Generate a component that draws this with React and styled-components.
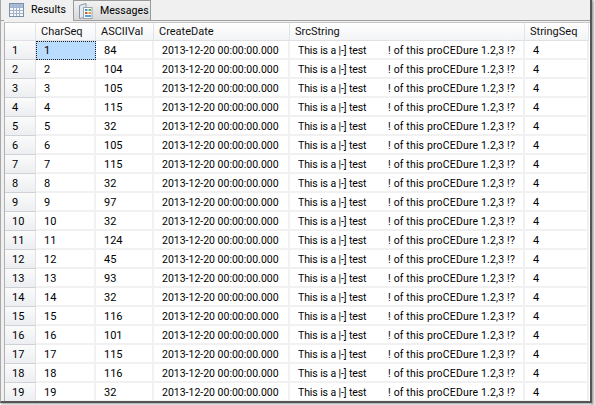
import React from "react";
import styled, { createGlobalStyle } from "styled-components";

const Global = createGlobalStyle`
  html, body { margin: 0; padding: 0; background: #e6e6e6; }
  body { width: 595px; height: 405px; overflow: hidden; font-family: Roboto, "Liberation Sans", Arial, sans-serif; }
`;

const Frame = styled.div`
  width: 595px;
  height: 405px;
  background: linear-gradient(90deg, #fff 0, #fff 590px, #c4c4c4 592px, #f2f2f2 595px);
`;

const Window = styled.div`
  width: 592px;
  height: 403px;
  box-sizing: border-box;
  display: flex;
  flex-direction: column;
  background: #f0f0f0;
  border-left: 1px solid #a8a8a8;
  border-right: 2px solid #555;
  border-bottom: 2px solid #555;
  box-shadow: 1px 1px 2px #999;
`;

const TabBar = styled.div`
  height: 20px;
  flex: none;
  display: flex;
  align-items: flex-end;
  padding-left: 3px;
  border-bottom: 1px solid #a0a0a0;
  box-sizing: content-box;
`;

const Tab = styled.div`
  display: flex;
  align-items: center;
  box-sizing: border-box;
  font-size: 10.6px;
  color: #000;
  height: ${(p) => (p.$active ? "21px" : "20px")};
  width: ${(p) => (p.$active ? "69px" : "78px")};
  gap: ${(p) => (p.$active ? "7px" : "7px")};
  padding-left: ${(p) => (p.$active ? "5px" : "4px")};
  padding-bottom: ${(p) => (p.$active ? "2px" : "0")};
  background: ${(p) => (p.$active ? "#f0f0f0" : "linear-gradient(#f2f2f2,#d8d8d8)")};
  border: ${(p) => (p.$active ? "none" : "1px solid #9a9a9a")};
  border-bottom: none;
  margin-bottom: ${(p) => (p.$active ? "-1px" : "0")};
`;

const Grid = styled.div`
  flex: 1;
  min-height: 0;
  margin: 1px 0 0 3px;
  background: #fff;
  border-left: 1px solid #b0b0b0;
  border-top: 1px solid #c8c8c8;
  overflow: hidden;
`;

const Row = styled.div`
  display: grid;
  grid-template-columns: 31px 60px 58px 136px 235px 64px;
  height: ${(p) => (p.$head ? 18 : 19)}px;
`;

const HeadCell = styled.div`
  box-sizing: border-box;
  height: 18px;
  padding-left: 5px;
  font-size: 11px;
  line-height: 17px;
  color: #111;
  background: linear-gradient(#fff, #f3f4f6);
  border-right: 1px solid #e2e4e8;
  border-bottom: 1px solid #dfe1e5;
`;

const RowHead = styled.div`
  box-sizing: border-box;
  height: 19px;
  padding: 1px 0 0 7px;
  font-size: 11px;
  line-height: 18px;
  color: #000;
  background: linear-gradient(#fbfbfb, #eceef1);
  border-right: 1px solid #e2e2e2;
  border-bottom: 1px solid #cfd1d5;
`;

const Cell = styled.div`
  box-sizing: border-box;
  height: 19px;
  padding: 1px 0 0 8px;
  font-size: 11px;
  line-height: 18px;
  color: #000;
  white-space: pre;
  overflow: hidden;
  background: #fff;
  border-right: 2px solid #f1f1f1;
  border-bottom: 2px solid #f1f1f1;
`;

const SelectedCell = styled(Cell)`
  background: #b9dcff;
  border: 1px dotted #222;
  padding: 1px 0 0 7px;
  line-height: 16px;
`;

const DateCell = styled(Cell)`
  font-size: 10.5px;
`;

const SrcCell = styled(Cell)`
  display: flex;
  font-size: 10.5px;
`;

const SrcHead = styled.span`
  width: 90px;
  flex: none;
  letter-spacing: -0.1px;
`;

const SrcTail = styled.span`
  letter-spacing: 0.16px;
`;

const GridIcon = () => (
  <svg width="15" height="14" viewBox="0 0 15 14">
    <rect x="0.5" y="0.5" width="14" height="13" fill="#f5f8fc" stroke="#7e8ea3" />
    <rect x="1" y="1" width="13" height="3" fill="#a7bfdc" />
    <path d="M1 4.5H14M1 7.5H14M1 10.5H14M4.5 1V13M7.5 1V13M10.5 1V13" stroke="#a3b4ca" />
  </svg>
);

const MessageIcon = () => (
  <svg width="15" height="16" viewBox="0 0 15 16">
    <path d="M1.5 2.5L8 0.5V14L1.5 15.5Z" fill="#e6ebf2" stroke="#8b97a6" />
    <rect x="5.5" y="4.5" width="8.5" height="11" fill="#fff" stroke="#9aa5b2" />
    <rect x="7" y="6" width="2.5" height="2" fill="#4a90d0" />
    <rect x="10.5" y="6" width="2.5" height="2" fill="#58b060" />
    <rect x="7" y="9" width="2.5" height="2" fill="#d05a3a" />
    <rect x="10.5" y="9" width="2.5" height="2" fill="#e0a030" />
    <rect x="7" y="12" width="6" height="2" fill="#5aa0d8" />
  </svg>
);

const rows = [
  [1, 84], [2, 104], [3, 105], [4, 115], [5, 32], [6, 105], [7, 115], [8, 32], [9, 97], [10, 32],
  [11, 124], [12, 45], [13, 93], [14, 32], [15, 116], [16, 101], [17, 115], [18, 116], [19, 32],
];

export default function App() {
  return (
    <Frame>
      <Global />
      <Window>
        <TabBar>
          <Tab $active><GridIcon />Results</Tab>
          <Tab><MessageIcon />Messages</Tab>
        </TabBar>
        <Grid>
          <Row $head>
            <HeadCell />
            <HeadCell>CharSeq</HeadCell>
            <HeadCell>ASCIIVal</HeadCell>
            <HeadCell>CreateDate</HeadCell>
            <HeadCell>SrcString</HeadCell>
            <HeadCell>StringSeq</HeadCell>
          </Row>
          {rows.map(([n, v]) => (
            <Row key={n}>
              <RowHead>{n}</RowHead>
              {n === 1 ? <SelectedCell>{n}</SelectedCell> : <Cell>{n}</Cell>}
              <Cell>{v}</Cell>
              <DateCell>2013-12-20 00:00:00.000</DateCell>
              <SrcCell>
                <SrcHead>This is a |-] test</SrcHead>
                <SrcTail>! of this proCEDure 1.2,3 !?</SrcTail>
              </SrcCell>
              <Cell>4</Cell>
            </Row>
          ))}
        </Grid>
      </Window>
    </Frame>
  );
}
